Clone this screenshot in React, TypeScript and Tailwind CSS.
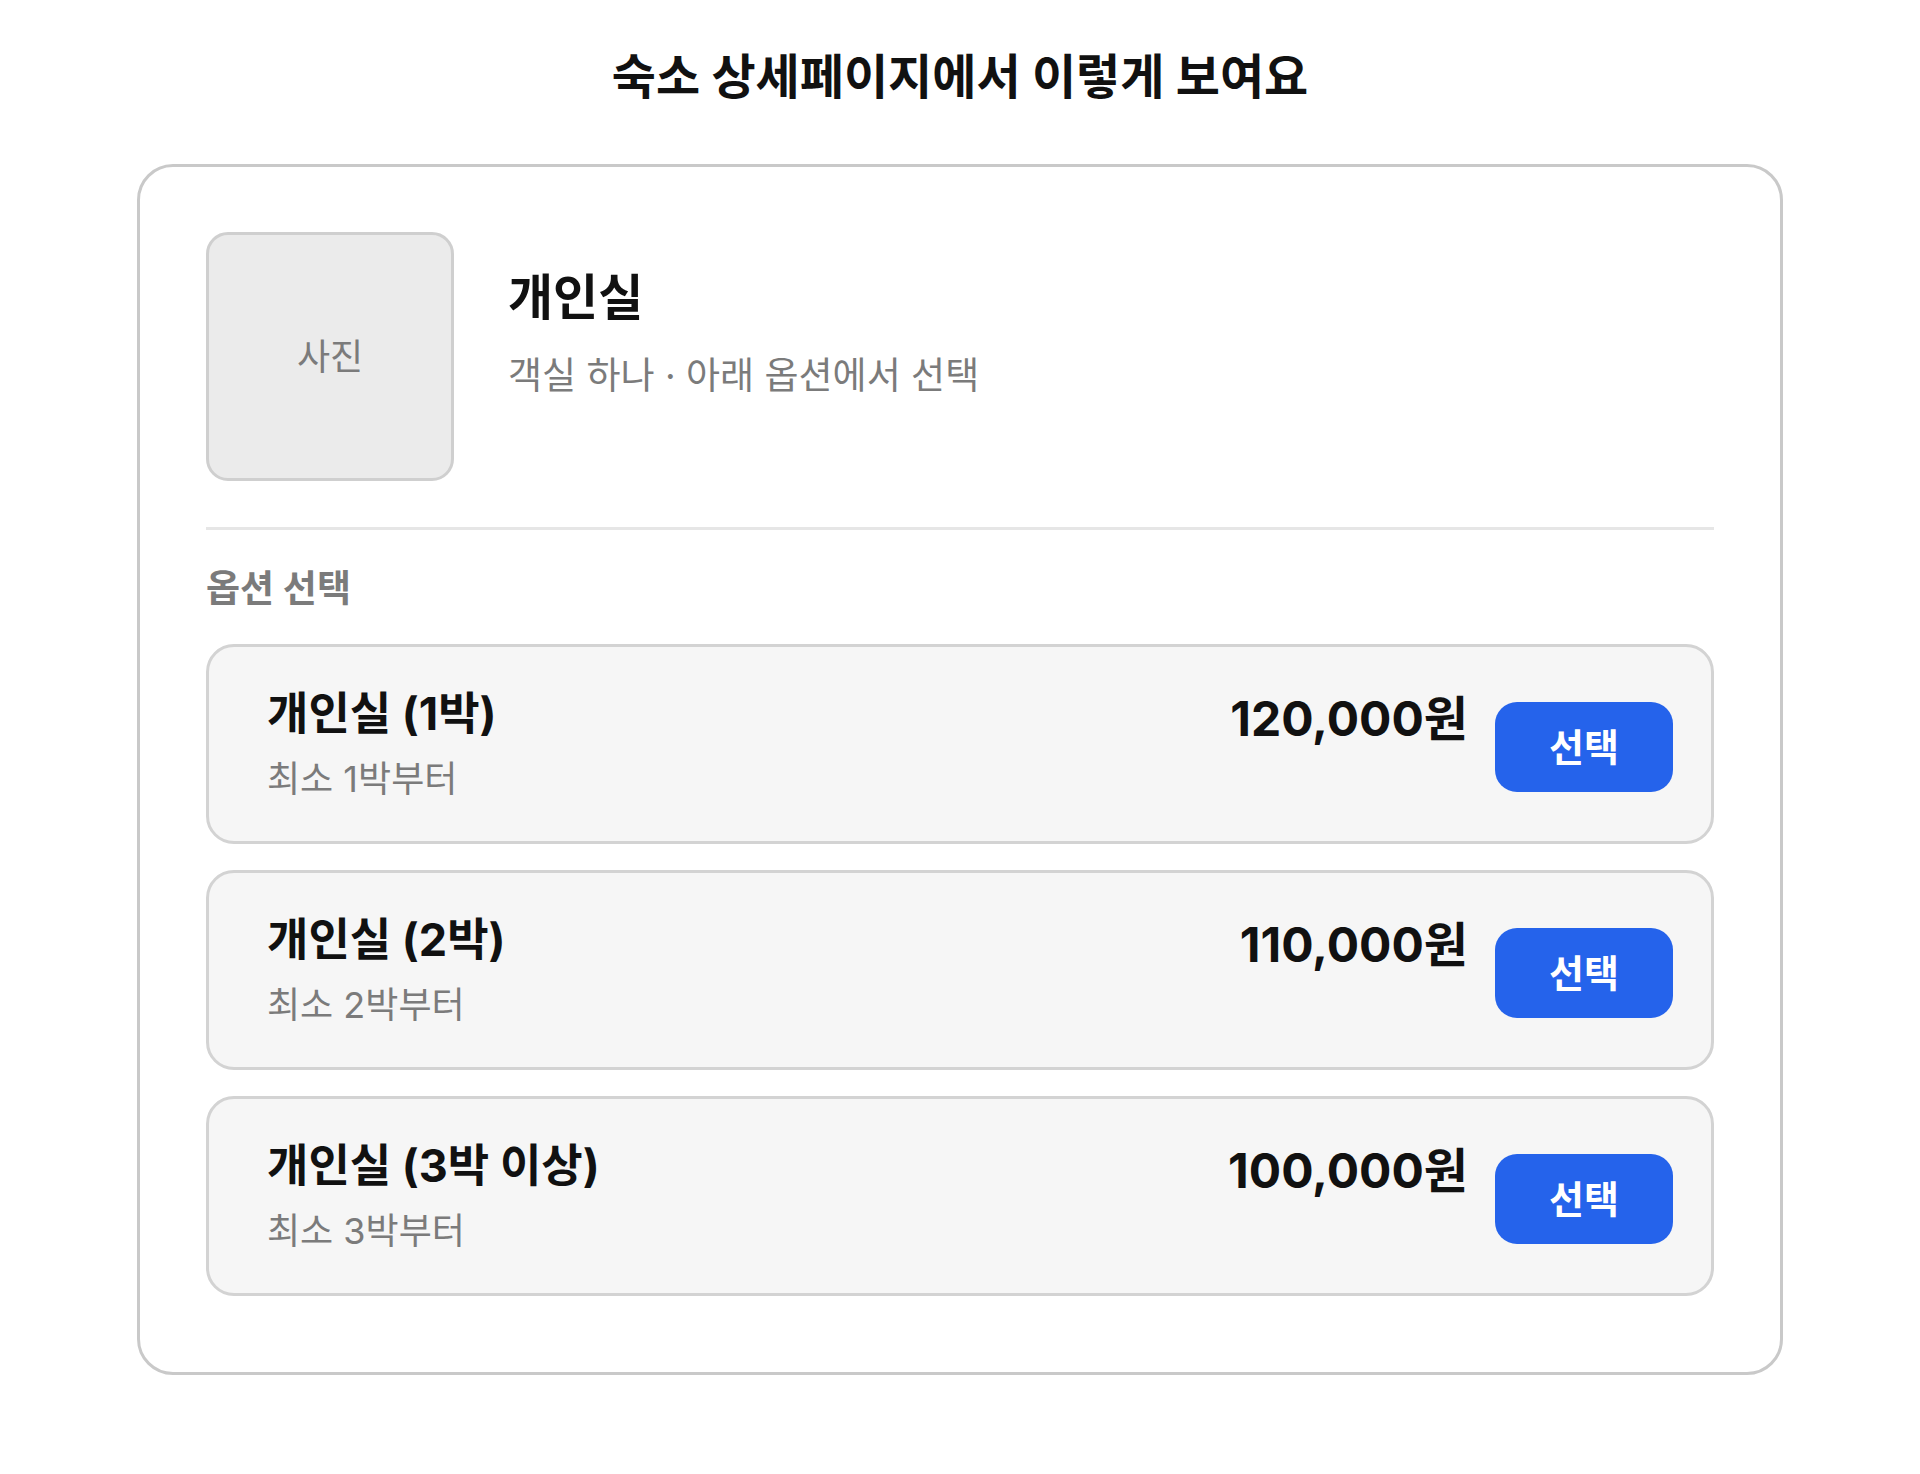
const options = [
  { name: '개인실 (1박)', note: '최소 1박부터', price: '120,000원' },
  { name: '개인실 (2박)', note: '최소 2박부터', price: '110,000원' },
  { name: '개인실 (3박 이상)', note: '최소 3박부터', price: '100,000원' },
];

function OptionRow({ name, note, price }: { name: string; note: string; price: string }) {
  return (
    <div className="flex h-[200px] items-start justify-between rounded-[28px] border-[3px] border-[#d3d3d3] bg-[#f6f6f6] pl-[58px] pr-[38px] pt-[41px]">
      <div className="flex flex-col">
        <div className="text-[45px] font-bold leading-[52px] text-[#111]">{name}</div>
        <div className="mt-[17px] text-[36px] leading-[44px] text-[#7b7b7b]">{note}</div>
      </div>
      <div className="flex items-start gap-[27px]">
        <div className="mt-[2px] text-[48px] font-bold leading-[58px] text-[#111]">{price}</div>
        <button className="mt-[14px] flex h-[90px] w-[178px] items-center justify-center rounded-[22px] bg-[#2563eb] text-[38px] font-bold text-white">
          선택
        </button>
      </div>
    </div>
  );
}

export default function App() {
  return (
    <div className="flex min-h-screen flex-col items-center bg-white font-['Inter','Noto_Sans_CJK_KR',sans-serif]">
      <h1 className="mt-[48px] text-[48px] font-bold leading-[58px] text-[#111]">숙소 상세페이지에서 이렇게 보여요</h1>

      <div className="mt-[58px] w-[1646px] rounded-[36px] border-[3px] border-[#c9c9c9] px-[66px] pb-[76px] pt-[65px]">
        {/* room header */}
        <div className="flex items-start">
          <div className="flex h-[249px] w-[248px] shrink-0 items-center justify-center rounded-[22px] border-[3px] border-[#cfcfcf] bg-[#ebebeb] text-[36px] text-[#7b7b7b]">
            사진
          </div>
          <div className="ml-[54px] flex flex-col pt-[37px]">
            <div className="text-[49px] font-bold leading-[58px] text-[#111]">개인실</div>
            <div className="mt-[26px] text-[37px] leading-[46px] text-[#7b7b7b]">객실 하나 · 아래 옵션에서 선택</div>
          </div>
        </div>

        <div className="mt-[46px] h-[3px] bg-[#e6e6e6]" />

        <div className="mt-[36px] text-[37px] font-bold leading-[46px] text-[#7b7b7b]">옵션 선택</div>

        <div className="mt-[32px] flex flex-col gap-[26px]">
          {options.map((o) => (
            <OptionRow key={o.name} {...o} />
          ))}
        </div>
      </div>
    </div>
  );
}
